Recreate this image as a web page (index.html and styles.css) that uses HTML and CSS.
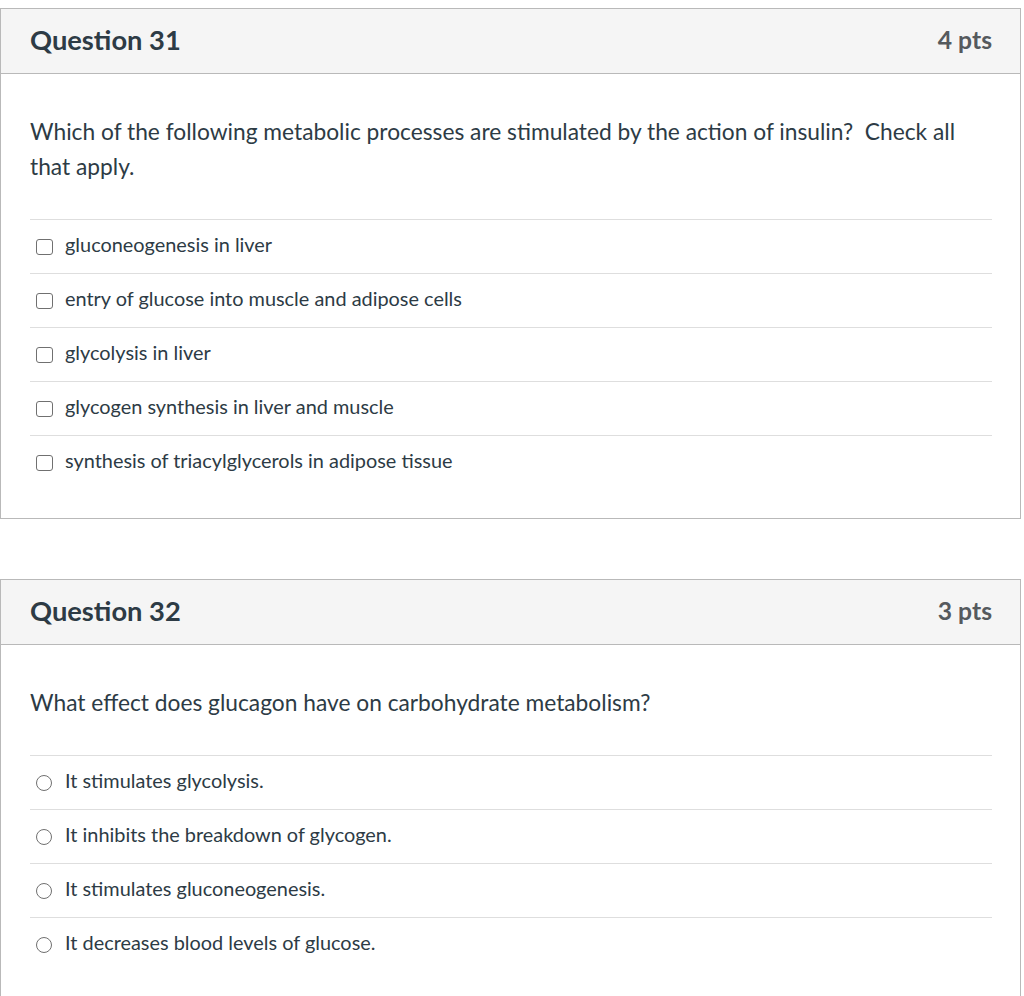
FILE: index.html
```html
<!DOCTYPE html>
<html lang="en">
<head>
<meta charset="utf-8">
<title>Quiz</title>
<link rel="stylesheet" href="styles.css">
</head>
<body>
<div class="quiz">
  <section class="question">
    <header class="q-header">
      <h2 class="q-title">Question 31</h2>
      <span class="q-pts">4 pts</span>
    </header>
    <div class="q-body">
      <p class="q-text">Which of the following metabolic processes are stimulated by the action of insulin?&nbsp; Check all that apply.</p>
      <ul class="answers">
        <li class="answer"><span class="box"></span><span class="label">gluconeogenesis in liver</span></li>
        <li class="answer"><span class="box"></span><span class="label">entry of glucose into muscle and adipose cells</span></li>
        <li class="answer"><span class="box"></span><span class="label">glycolysis in liver</span></li>
        <li class="answer"><span class="box"></span><span class="label">glycogen synthesis in liver and muscle</span></li>
        <li class="answer"><span class="box"></span><span class="label">synthesis of triacylglycerols in adipose tissue</span></li>
      </ul>
    </div>
  </section>
  <section class="question">
    <header class="q-header">
      <h2 class="q-title">Question 32</h2>
      <span class="q-pts">3 pts</span>
    </header>
    <div class="q-body">
      <p class="q-text">What effect does glucagon have on carbohydrate metabolism?</p>
      <ul class="answers">
        <li class="answer"><span class="radio"></span><span class="label">It stimulates glycolysis.</span></li>
        <li class="answer"><span class="radio"></span><span class="label">It inhibits the breakdown of glycogen.</span></li>
        <li class="answer"><span class="radio"></span><span class="label">It stimulates gluconeogenesis.</span></li>
        <li class="answer"><span class="radio"></span><span class="label">It decreases blood levels of glucose.</span></li>
      </ul>
    </div>
  </section>
</div>
</body>
</html>
```
FILE: styles.css
```css
html, body {
  margin: 0;
  padding: 0;
  background: #fff;
}
body {
  font-family: Lato, "Noto Sans", sans-serif;
  color: #2d3b45;
  padding-top: 8px;
}
.quiz {
  display: flex;
  flex-direction: column;
  gap: 60px;
}
.question {
  width: 1021px;
  box-sizing: border-box;
  border: 1px solid #b9b9b9;
  background: #fff;
}
.q-header {
  height: 65px;
  box-sizing: border-box;
  border-bottom: 1px solid #b9b9b9;
  background: #f5f5f5;
  display: flex;
  align-items: center;
  justify-content: space-between;
  padding: 0 28px 4px 29px;
}
.q-title {
  margin: 0;
  font-size: 27.3px;
  font-weight: 700;
  color: #2d3b45;
}
.q-pts {
  font-size: 24.7px;
  font-weight: 700;
  color: #555a5e;
}
.q-body {
  padding: 40px 28px 29px 29px;
}
.q-text {
  margin: 0 0 35px;
  font-size: 22.75px;
  line-height: 35px;
}
.answers {
  list-style: none;
  margin: 0;
  padding: 0;
}
.answer {
  height: 54px;
  box-sizing: border-box;
  border-top: 1px solid #dedede;
  display: flex;
  align-items: center;
  padding-left: 6px;
  font-size: 19.9px;
}
.label {
  padding-bottom: 6px;
}
.box {
  width: 17px;
  height: 16px;
  box-sizing: border-box;
  border: 1.5px solid #707070;
  border-radius: 3px;
  flex: none;
  margin-right: 12px;
}
.radio {
  width: 16px;
  height: 16px;
  box-sizing: border-box;
  border: 1.5px solid #707070;
  border-radius: 50%;
  flex: none;
  margin-right: 13px;
}
```
